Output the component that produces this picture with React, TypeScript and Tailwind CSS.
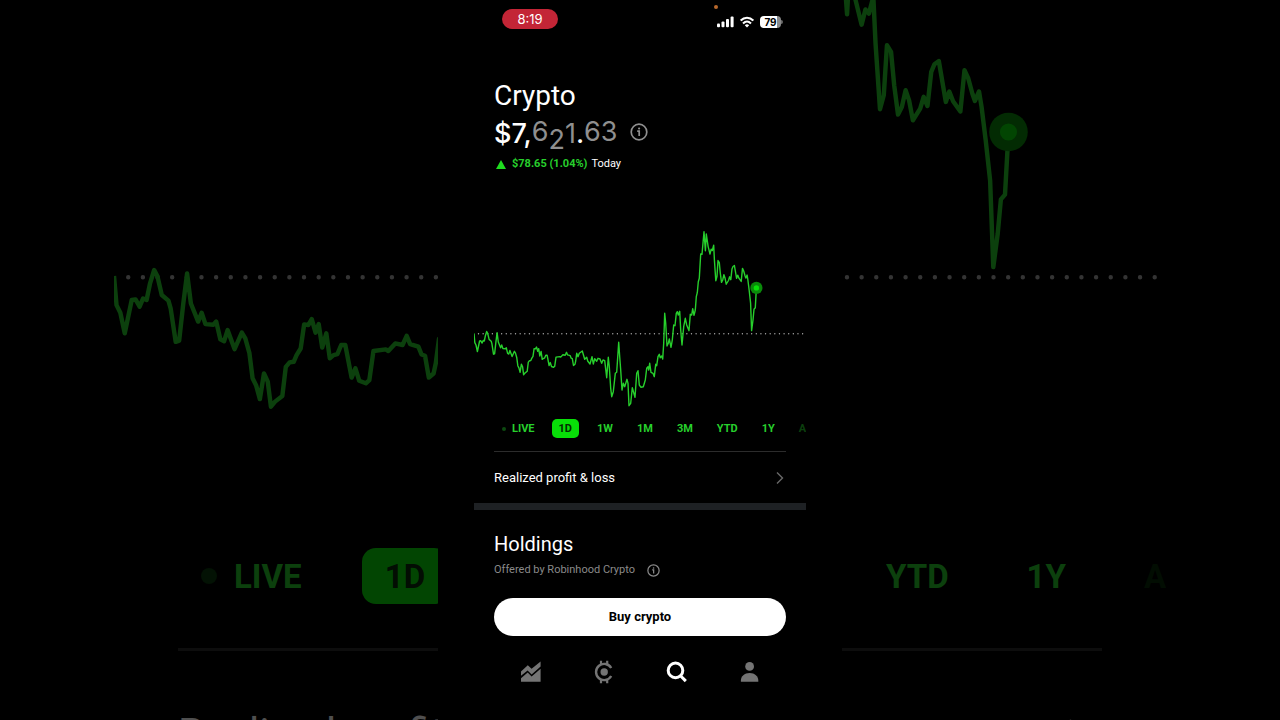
const PRICE_LINE =
  '0,113.4 0.8,122.6 2,125 3.4,131.5 5.6,121 6.8,120.8 8.1,123.1 9.2,120.5 10.3,121 11.4,115.7 12.7,111.5 13.7,113.4 15.1,119.4 17.2,121.2 17.9,123.6 19.5,134.2 20.6,133.8 21.9,122.1 23.1,112.6 24.3,122.1 26.6,127.8 27.7,125 28.9,128.6 31.4,128.8 32.3,127.8 33.6,133.4 34.8,134 35.9,130.5 38.1,136.5 40.4,131.3 41.5,133.1 42.8,137.8 43.8,145.7 44.9,147.9 46.1,152.3 47.4,144.2 48.6,146.8 49.6,154.7 50.9,153.1 53.2,151.3 54.3,142.1 55.5,140.7 56.8,140.5 57.7,138.4 59,136.3 60.1,128.7 61.4,128.9 62.5,127 63.7,131.3 64.7,128.6 65.8,136 67.1,131.5 68.2,139.4 69.4,138.4 70.6,138.1 71.8,135.2 73.1,135.2 75.1,145.5 76.3,142.6 77.5,146.5 79.6,147.3 80.7,146.3 82,137.1 85.9,136.6 86.7,137.1 88.9,134.7 91.2,135.2 92.5,132.3 93.6,134.9 96.2,135.7 97.2,138.2 98.3,138.6 99.5,145.5 101,144.2 101.7,141 102.7,133.3 104,136.7 105.3,133.3 108.3,131 110.7,139.3 112.7,137.3 113.7,141 116,144 118,136.7 119.3,144 120.7,138.7 122.7,141.3 124,138.3 126,139 127.7,143.3 129,140 130.7,140.7 132.7,157.7 134.3,137.3 135.3,146.7 136.7,168.3 137.7,176.7 139.3,171.7 141.3,153.3 142.7,152.3 144.7,122.3 145.7,136.7 146.7,150 148,170 149.3,163.3 150.7,166.7 153,159.3 154,163.3 155,185.7 156.7,183.3 158.3,167.7 161,177.3 162,163.3 162.7,153.3 164,150.7 165.3,165 167,167.3 169.3,166.7 171.3,160 172.7,148.3 174,146.7 174.7,150 175.7,143.3 177,152.3 179,153.3 180.3,156.7 181.7,144.3 182.7,145.7 184,136.7 185.3,134.3 186.3,137.7 187.7,136 188.7,139 189.7,123.3 190.7,93.3 191.7,103.3 193,126 194.3,123.3 195.3,119 197,127.3 198.3,120 199.7,105 201,105.7 202.3,93.3 203.3,91.7 204.3,95 205.7,91.3 206.7,110 208,125 209.7,106.7 211.3,98.3 212.7,105 215,110.7 216.3,94.3 217.7,95 218.7,88.7 220,95.3 221.3,90 222.3,76.7 223.3,72.7 224.3,61.7 225.3,58.3 226.7,34 228,34.3 230,11.7 231.4,30.7 232.3,14 234.1,26.3 236,34 237.2,29.2 238.3,30.5 239.7,25.2 240.4,40 241.8,60.7 243,56.3 244,40.5 245.3,42.6 246.3,53.2 247.5,62.4 248.7,60 249.9,54.7 251,57.9 252.2,64.2 254.5,60.5 255.6,56.8 256.8,59.7 258,48.9 259,46.5 260.4,45.5 262.6,58.4 263.7,55.1 264.9,58.2 267.2,61.4 268.5,48.4 269.7,51 271,55.8 271.8,58.1 273.1,55.1 273.9,60 275.2,70.5 276.6,83.2 277.6,110.6 279,100 280,89.2 281.3,87.7 282.4,67.9'

const RANGES = ['1D', '1W', '1M', '3M', 'YTD', '1Y']

const DIGITS = [
  { char: '$7,', className: 'pt-1 font-medium' },
  { char: '6', className: 'pt-0.5 text-[#8f8f8f]' },
  { char: '2', className: 'pt-2.5 text-[#8f8f8f]' },
  { char: '1', className: 'pt-1 text-[#8f8f8f]' },
  { char: '.', className: 'pt-1 font-medium' },
  { char: '6', className: 'pt-0.5 text-[#8f8f8f]' },
  { char: '3', className: 'pt-0.5 text-[#8f8f8f]' },
]

function PriceChart({ viewBox, className }: { viewBox: string; className: string }) {
  return (
    <svg viewBox={viewBox} className={className} fill="none" aria-hidden="true">
      <line x1="4.5" y1="113.8" x2="329" y2="113.8" stroke="#a8a8a8" strokeWidth="1.4" strokeLinecap="round" strokeDasharray="0 4.63" />
      <polyline points={PRICE_LINE} stroke="#27cf2c" strokeWidth="1.4" strokeLinejoin="round" />
      <circle cx="282.4" cy="67.9" r="6.1" fill="#0a8a0a" />
      <circle cx="282.4" cy="67.9" r="2.7" fill="#08df08" />
    </svg>
  )
}

function InfoIcon({ className }: { className: string }) {
  return (
    <svg viewBox="0 0 18 18" className={className} fill="none" stroke="currentColor" strokeWidth="1.7" aria-hidden="true">
      <circle cx="9" cy="9" r="7.8" />
      <path d="M7.2 8.2h2v4.8" />
      <circle cx="9.1" cy="5.5" r="1.1" fill="currentColor" stroke="none" />
    </svg>
  )
}

function Chevron({ className }: { className: string }) {
  return (
    <svg viewBox="0 0 8 14" className={className} fill="none" stroke="currentColor" strokeWidth="1.4" aria-hidden="true">
      <path d="M1 1.5L6.5 7L1 12.5" />
    </svg>
  )
}

function StatusBar() {
  return (
    <header className="flex h-[78px] items-start justify-between pl-7 pr-[23px] pt-[9px]">
      <span className="flex h-5 w-14 items-center justify-center rounded-full bg-[#c32536] pt-px font-['Inter',sans-serif] text-[13px]">
        8:19
      </span>
      <div className="relative flex items-center gap-1.5 pt-[7px]">
        <span className="absolute -top-1 left-[-3px] size-1 rounded-full bg-[#b8682c]" />
        <svg viewBox="0 0 17 12" className="h-3 w-[17px]" fill="currentColor" aria-hidden="true">
          <rect x="0" y="7.4" width="3" height="3.8" rx="1" />
          <rect x="4.5" y="5.4" width="3" height="5.8" rx="1" />
          <rect x="9" y="3" width="3" height="8.2" rx="1" />
          <rect x="13.6" y="0.6" width="3" height="10.6" rx="1" />
        </svg>
        <svg viewBox="0 0 14 12" className="h-3 w-3.5" fill="none" stroke="currentColor" strokeWidth="2.1" aria-hidden="true">
          <path d="M0.7 4.6C4.3 0.8 9.7 0.8 13.3 4.6" />
          <path d="M3 7.4C5.4 5.1 8.6 5.1 11 7.4" />
          <path d="M7 11.4L4.8 9.2C6.1 8 7.9 8 9.2 9.2Z" fill="currentColor" stroke="none" />
        </svg>
        <div className="flex items-center">
          <span className="flex h-3 w-[21px] items-center justify-center rounded bg-linear-to-r from-white from-80% to-[#8a8a8a] to-80% font-['Inter',sans-serif] text-[10px] font-bold text-black">
            79
          </span>
          <span className="h-1 w-0.5 rounded-r-full bg-[#6a6a6a]" />
        </div>
      </div>
    </header>
  )
}

function BottomNav() {
  return (
    <nav className="grid grid-cols-4 px-5 pt-6 text-[#747474]">
      <a href="#investing" aria-label="Investing" className="flex justify-center">
        <svg viewBox="0 0 24 24" className="size-6" fill="currentColor" aria-hidden="true">
          <path d="M2 11.6L8.8 5.2l3.8 3.6L21.6 1.4v5.2l-9 8-4-4L2 15.8z" />
          <path d="M2 18.2L8.7 12.4l3.9 4 9-7.6V21.8H2z" />
        </svg>
      </a>
      <a href="#crypto" aria-label="Crypto" className="flex justify-center">
        <svg viewBox="0 0 24 24" className="size-6" fill="none" stroke="currentColor" aria-hidden="true">
          <path d="M19.2 8A8.1 8.1 0 1 0 19.2 16" strokeWidth="2.4" />
          <circle cx="12.2" cy="12" r="3.7" fill="currentColor" stroke="none" />
          <path d="M9 0.8v4M15.2 0.8v4M9 19.2v4M15.2 19.2v4" strokeWidth="2.2" />
        </svg>
      </a>
      <a href="#search" aria-label="Search" className="flex justify-center text-white">
        <svg viewBox="0 0 24 24" className="size-6" fill="none" stroke="currentColor" strokeWidth="3" aria-hidden="true">
          <circle cx="10.5" cy="10.4" r="7.3" />
          <path d="M15 15.2l5.8 5.9" />
        </svg>
      </a>
      <a href="#account" aria-label="Account" className="flex justify-center">
        <svg viewBox="0 0 24 24" className="size-6" fill="currentColor" aria-hidden="true">
          <circle cx="11.6" cy="6.4" r="4.4" />
          <path d="M2.9 21.8v-1.2c0-4.4 3.6-7.6 8.7-7.6s8.7 3.2 8.7 7.6v1.2z" />
        </svg>
      </a>
    </nav>
  )
}

export default function App() {
  return (
    <div className="flex h-screen justify-center overflow-hidden bg-black font-['Roboto',sans-serif] text-white">
      {/* Enlarged, dimmed left side of the screen */}
      <aside className="flex min-w-0 flex-1 justify-end overflow-hidden opacity-[0.31]" aria-hidden="true">
        <div className="w-[324px] shrink-0">
          <PriceChart viewBox="0 26.2 102.4 170.6" className="h-[540px] w-full" />
          <div className="mt-2 flex h-14 items-center overflow-hidden pl-[87px] text-[33px] font-bold text-[#27cf2c]">
            <span className="size-4 shrink-0 rounded-full bg-[#0a3a0d]" />
            <span className="ml-[17px] w-[128px] shrink-0 pt-0.5">LIVE</span>
            <span className="flex h-full w-[86px] shrink-0 items-center justify-center rounded-[14px] bg-[#08df08] pt-0.5 text-[#0a2a0a]">1D</span>
          </div>
          <div className="ml-16 mt-11 border-t-3 border-[#2c2c2c] pt-[59px]">
            <p className="whitespace-nowrap text-[42px] leading-[48px]">Realized profit</p>
          </div>
        </div>
      </aside>

      <main className="w-[404px] shrink-0 px-9">
        <StatusBar />

        <section className="px-5">
          <h1 className="text-[28px] leading-9">Crypto</h1>
          <div className="flex h-9 items-center gap-3">
            <p className="flex h-9 font-['Inter',sans-serif] text-[27px] leading-8">
              {DIGITS.map((digit, i) => (
                <span key={i} className={digit.className}>
                  {digit.char}
                </span>
              ))}
            </p>
            <button type="button" aria-label="About your balance" className="text-[#8f8f8f]">
              <InfoIcon className="size-[18px]" />
            </button>
          </div>
          <p className="mt-1.5 flex items-center gap-1 text-[11px] leading-4">
            <svg viewBox="0 0 10 9" className="mx-0.5 h-[9px] w-2.5" fill="#1fdc1f" aria-hidden="true">
              <path d="M5 0L10 9H0Z" />
            </svg>
            <span className="font-bold text-[#27cf2c]">$78.65 (1.04%)</span>
            <span>Today</span>
          </p>
        </section>

        <PriceChart viewBox="0 0 332 195" className="mt-12 h-[195px] w-full" />

        <div className="mt-1 flex h-[19px] items-center gap-3 overflow-hidden pl-7 text-[11px] font-bold text-[#27cf2c]">
          <button type="button" className="flex shrink-0 items-center gap-1.5 pr-[5px] pt-px">
            <span className="size-1 rounded-full bg-[#0c4a10]" />
            LIVE
          </button>
          {RANGES.map((range) => (
            <button
              key={range}
              type="button"
              className={range === '1D' ? 'h-full shrink-0 rounded-[5px] bg-[#08df08] px-[7px] pt-px text-[#032a03]' : 'shrink-0 px-1.5 pt-px'}
            >
              {range}
            </button>
          ))}
          <button type="button" aria-label="All" className="shrink-0 pl-1.5 pt-px opacity-30">A</button>
        </div>

        <div className="px-5 pt-[13px]">
          <a href="#realized" className="flex h-[52px] items-center justify-between border-t border-[#2c2c2c] pr-0.5 text-[13px]">
            Realized profit &amp; loss
            <Chevron className="h-3.5 w-2 text-[#686868]" />
          </a>
        </div>
        <div className="h-[7px] bg-[#1e2124]" />

        <section className="px-5 pt-5">
          <h2 className="text-xl leading-7">Holdings</h2>
          <p className="mt-1 flex items-center gap-3 text-[11px] leading-4 text-[#8a8a8a]">
            Offered by Robinhood Crypto
            <InfoIcon className="size-[13px]" />
          </p>
          <button type="button" className="mt-5 h-[38px] w-full rounded-full bg-white text-[13px] font-bold text-black">
            Buy crypto
          </button>
        </section>

        <BottomNav />
      </main>

      {/* Enlarged, dimmed right side */}
      <aside className="min-w-0 flex-1 overflow-hidden opacity-[0.31]" aria-hidden="true">
        <div className="w-[316px]">
          <PriceChart viewBox="229.8 26.2 99.84 170.6" className="h-[540px] w-full" />
          <div className="mt-2 flex h-14 items-center gap-[78px] pl-11 pt-0.5 text-[33px] font-bold text-[#27cf2c]">
            <span>YTD</span>
            <span>1Y</span>
            <span className="opacity-20">A</span>
          </div>
          <div className="mr-14 mt-11 flex justify-end border-t-3 border-[#2c2c2c] pr-3 pt-16">
            <Chevron className="h-11 w-6 text-[#686868]" />
          </div>
        </div>
      </aside>
    </div>
  )
}
